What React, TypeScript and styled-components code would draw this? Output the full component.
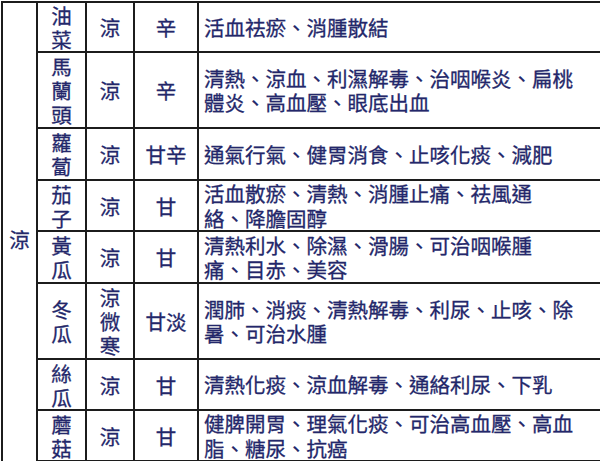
import React from 'react';
import styled, { createGlobalStyle } from 'styled-components';

type Food = {
  name: string[];
  nature: string[];
  taste: string;
  effect: string[];
  height: number;
};

const foods: Food[] = [
  { name: ['油', '菜'], nature: ['涼'], taste: '辛', effect: ['活血祛瘀、消腫散結'], height: 49 },
  {
    name: ['馬', '蘭', '頭'],
    nature: ['涼'],
    taste: '辛',
    effect: ['清熱、涼血、利濕解毒、治咽喉炎、扁桃', '體炎、高血壓、眼底出血'],
    height: 76,
  },
  { name: ['蘿', '蔔'], nature: ['涼'], taste: '甘辛', effect: ['通氣行氣、健胃消食、止咳化痰、減肥'], height: 52 },
  {
    name: ['茄', '子'],
    nature: ['涼'],
    taste: '甘',
    effect: ['活血散瘀、清熱、消腫止痛、祛風通', '絡、降膽固醇'],
    height: 51,
  },
  {
    name: ['黃', '瓜'],
    nature: ['涼'],
    taste: '甘',
    effect: ['清熱利水、除濕、滑腸、可治咽喉腫', '痛、目赤、美容'],
    height: 52,
  },
  {
    name: ['冬', '瓜'],
    nature: ['涼', '微', '寒'],
    taste: '甘淡',
    effect: ['潤肺、消痰、清熱解毒、利尿、止咳、除', '暑、可治水腫'],
    height: 76,
  },
  { name: ['絲', '瓜'], nature: ['涼'], taste: '甘', effect: ['清熱化痰、涼血解毒、通絡利尿、下乳'], height: 51 },
  {
    name: ['蘑', '菇'],
    nature: ['涼'],
    taste: '甘',
    effect: ['健脾開胃、理氣化痰、可治高血壓、高血', '脂、糖尿、抗癌'],
    height: 50,
  },
];

const GlobalStyle = createGlobalStyle`
  html, body {
    margin: 0;
    padding: 0;
    background: #ffffff;
    overflow: hidden;
  }
`;

const Page = styled.div`
  width: 600px;
  height: 461px;
  overflow: hidden;
  padding-left: 1px;
  padding-top: 1px;
  box-sizing: border-box;
`;

const Table = styled.table`
  border-collapse: collapse;
  table-layout: fixed;
  width: 640px;
  font-family: 'Noto Sans CJK TC', 'Noto Sans CJK SC', sans-serif;
  font-size: 20.5px;
  color: #23276a;
  -webkit-text-stroke: 0.3px #23276a;
`;

const Col = styled.col<{ $w: number }>`
  width: ${({ $w }) => $w}px;
`;

const Row = styled.tr<{ $h: number }>`
  height: ${({ $h }) => $h}px;
`;

const Cell = styled.td`
  border: 2px solid #1c1c1c;
  padding: 0;
  text-align: center;
  vertical-align: middle;
  line-height: 24px;
`;

const GroupCell = styled(Cell)`
  border-bottom: none;
  padding-top: 14px;
`;

const EffectCell = styled(Cell)`
  text-align: left;
  padding-left: 5px;
  line-height: 24.5px;
  white-space: nowrap;
`;

const Line = styled.div`
  display: block;
`;

export default function App() {
  return (
    <Page>
      <GlobalStyle />
      <Table>
        <colgroup>
          <Col $w={35} />
          <Col $w={49} />
          <Col $w={48} />
          <Col $w={64} />
          <Col $w={444} />
        </colgroup>
        <tbody>
          {foods.map((f, i) => (
            <Row $h={f.height} key={i}>
              {i === 0 && <GroupCell rowSpan={foods.length}>涼</GroupCell>}
              <Cell>
                {f.name.map((c, j) => (
                  <Line key={j}>{c}</Line>
                ))}
              </Cell>
              <Cell>
                {f.nature.map((c, j) => (
                  <Line key={j}>{c}</Line>
                ))}
              </Cell>
              <Cell>{f.taste}</Cell>
              <EffectCell>
                {f.effect.map((l, j) => (
                  <Line key={j}>{l}</Line>
                ))}
              </EffectCell>
            </Row>
          ))}
        </tbody>
      </Table>
    </Page>
  );
}
